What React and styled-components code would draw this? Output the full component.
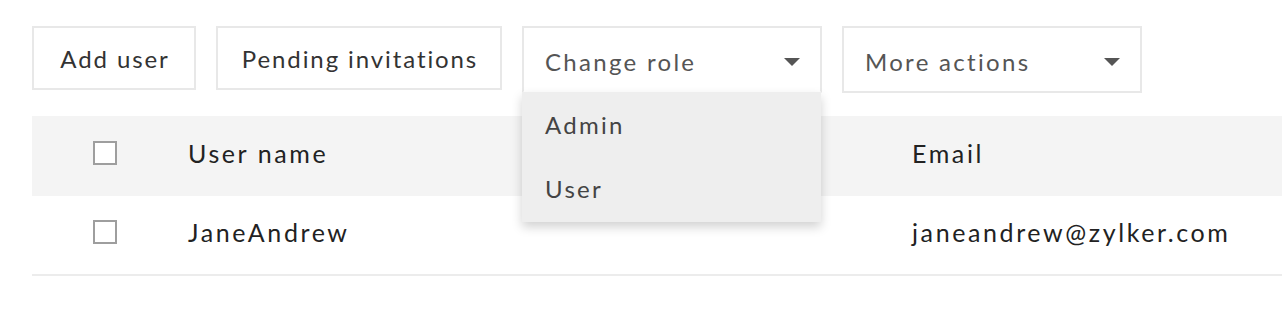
import React from "react"
import styled, { createGlobalStyle } from "styled-components"

const GlobalStyle = createGlobalStyle`
  body {
    margin: 0;
    background: #fff;
    font-family: Lato, "Open Sans", sans-serif;
    color: #333;
  }
`

const Page = styled.div`
  padding: 26px 0 0 32px;
  width: 1250px;
`

const Toolbar = styled.div`
  display: flex;
  align-items: flex-start;
  gap: 20px;
`

const Button = styled.button`
  box-sizing: border-box;
  width: ${props => props.w}px;
  height: 64px;
  padding: 0 0 0 2px;
  border: 2px solid #e8e8e8;
  background: #fff;
  font-family: inherit;
  font-size: 24px;
  letter-spacing: 1.9px;
  color: #333;
`

const SelectWrap = styled.div`
  position: relative;
`

const Select = styled.div`
  box-sizing: border-box;
  width: 300px;
  height: 67px;
  padding: 4px 20px 0 21px;
  border: 2px solid #e8e8e8;
  border-bottom-color: ${props => (props.open ? "transparent" : "#e8e8e8")};
  display: flex;
  align-items: center;
  justify-content: space-between;
  font-size: 24px;
  letter-spacing: 2.3px;
  color: #555;
`

const Caret = styled.span`
  width: 0;
  height: 0;
  border-left: 8px solid transparent;
  border-right: 8px solid transparent;
  border-top: 8px solid #555;
`

const Menu = styled.ul`
  position: absolute;
  z-index: 5;
  top: 66px;
  left: 0;
  width: 299px;
  margin: 0;
  padding: 0 0 2px;
  list-style: none;
  background: #eeeeee;
  box-shadow: 0 5px 10px rgba(0, 0, 0, 0.18);
`

const MenuItem = styled.li`
  height: 64px;
  padding: 0 23px;
  display: flex;
  align-items: center;
  font-size: 24px;
  letter-spacing: 2.3px;
  color: #444;
`

const Table = styled.div`
  margin-top: 23px;
`

const Row = styled.div`
  box-sizing: border-box;
  display: grid;
  grid-template-columns: 156px 724px 1fr;
  align-items: center;
  height: 80px;
  padding-bottom: 7px;
  background: ${props => (props.head ? "#f4f4f4" : "#fff")};
  border-bottom: ${props => (props.head ? "none" : "2px solid #ececec")};
  font-size: 25px;
  letter-spacing: 2.6px;
  color: #222;
`

const Check = styled.span`
  box-sizing: border-box;
  width: 24px;
  height: 24px;
  margin-left: 61px;
  border: 2px solid #9e9e9e;
  background: #fff;
`

export default function App() {
  return (
    <>
      <GlobalStyle />
      <Page>
        <Toolbar>
          <Button w={164}>Add user</Button>
          <Button w={286}>Pending invitations</Button>
          <SelectWrap>
            <Select open>
              Change role
              <Caret />
            </Select>
            <Menu>
              <MenuItem>Admin</MenuItem>
              <MenuItem>User</MenuItem>
            </Menu>
          </SelectWrap>
          <SelectWrap>
            <Select>
              More actions
              <Caret />
            </Select>
          </SelectWrap>
        </Toolbar>
        <Table>
          <Row head>
            <Check />
            <span>User name</span>
            <span>Email</span>
          </Row>
          <Row>
            <Check />
            <span>JaneAndrew</span>
            <span>janeandrew@zylker.com</span>
          </Row>
        </Table>
      </Page>
    </>
  )
}
